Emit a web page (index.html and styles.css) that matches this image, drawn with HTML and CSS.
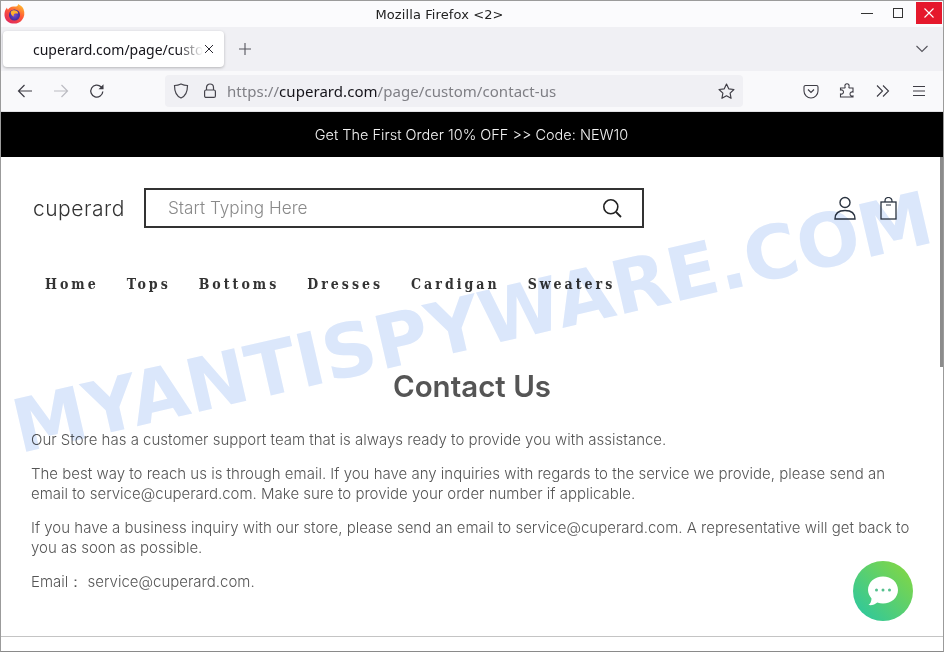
FILE: index.html
```html
<!DOCTYPE html>
<html lang="en">
<head>
<meta charset="utf-8">
<title>Mozilla Firefox</title>
<link rel="stylesheet" href="styles.css">
</head>
<body>
<div class="window">
  <header class="titlebar">
    <svg class="ff-logo" viewBox="0 0 24 24" width="24" height="24">
      <defs>
        <linearGradient id="ffa" x1="0.8" y1="0" x2="0.2" y2="1"><stop offset="0" stop-color="#ffbd2e"/><stop offset=".45" stop-color="#ff5a36"/><stop offset="1" stop-color="#e0245e"/></linearGradient>
        <radialGradient id="ffb" cx=".5" cy=".5" r=".5"><stop offset="0" stop-color="#7a4fd0"/><stop offset="1" stop-color="#3f2a9c"/></radialGradient>
      </defs>
      <path d="M16 2c3 2 4.500 2.500 5.500 5 1.500 4 1 8-1.500 11-2.500 3-6 4-9.500 3.500C5.500 21 2 17 2.500 11.500 2.800 9 3.500 7.500 5 5.500c0 1 .3 1.700 1 2.300C7 5.500 9.500 4 12.500 4.500 14 4.700 16.500 4 16 2z" fill="url(#ffa)"/>
      <circle cx="12.500" cy="13" r="5.500" fill="url(#ffb)"/>
      <path d="M9 9.500c2-2 6-1.500 7 1 .5 1.500-1 1-2.500 1-1.500 0-2.500 1.500-1.500 3-2-.5-4-3-3-5z" fill="#ffb02e"/>
    </svg>
    <div class="title">Mozilla Firefox &lt;2&gt;</div>
    <div class="winctl">
      <span class="min"></span>
      <span class="max"></span>
      <span class="close"><svg viewBox="0 0 12 12" width="12" height="12"><path d="M1.500 1.500l9 9M10.500 1.500l-9 9" stroke="#fff" stroke-width="1.100" fill="none"/></svg></span>
    </div>
  </header>
  <div class="tabbar">
    <div class="tab">
      <span class="tab-text">cuperard.com/page/custom/contact-us</span>
      <svg class="tab-x" viewBox="0 0 10 10" width="10" height="10"><path d="M1 1l8 8M9 1l-8 8" stroke="#2b2a33" stroke-width="1" fill="none"/></svg>
    </div>
    <svg class="newtab" viewBox="0 0 12 12" width="12" height="12"><path d="M6 0v12M0 6h12" stroke="#55545c" stroke-width="1.100" fill="none"/></svg>
    <svg class="tablist" viewBox="0 0 12 8" width="12" height="8"><path d="M.5 1L6 6.500 11.500 1" stroke="#55545c" stroke-width="1.100" fill="none"/></svg>
  </div>
  <nav class="toolbar">
    <svg class="tb-back" viewBox="0 0 16 16" width="16" height="16"><path d="M15 8H1.500M7.500 2L1.500 8l6 6" stroke="#3e3d45" stroke-width="1.200" fill="none"/></svg>
    <svg class="tb-fwd" viewBox="0 0 16 16" width="16" height="16"><path d="M1 8h13.500M8.500 2l6 6-6 6" stroke="#bcbcc2" stroke-width="1.200" fill="none"/></svg>
    <svg class="tb-reload" viewBox="0 0 16 16" width="16" height="16"><path d="M13.800 8.500A6 6 0 1 1 12 3.800L14 5.500" stroke="#3e3d45" stroke-width="1.300" fill="none"/><path d="M14.500 1.200v5h-5z" fill="#3e3d45"/></svg>
    <div class="urlbar">
      <svg class="shield" viewBox="0 0 16 16" width="16" height="16"><path d="M8 1c2 1 4 1.500 6.500 1.500 0 6-1.500 10.500-6.500 12.500C3 13 1.500 8.500 1.500 2.500 4 2.500 6 2 8 1z" stroke="#45444c" stroke-width="1.200" fill="none"/></svg>
      <svg class="lock" viewBox="0 0 14 16" width="14" height="16"><path d="M3.500 7V4.500a3.500 3.500 0 0 1 7 0V7" stroke="#45444c" stroke-width="1.200" fill="none"/><rect x="1.600" y="7" width="10.800" height="7.400" rx="1.500" stroke="#45444c" stroke-width="1.200" fill="none"/></svg>
      <span class="url"><span class="dim">https://</span>cuperard.com<span class="dim">/page/custom/contact-us</span></span>
      <svg class="star" viewBox="0 0 16 16" width="17" height="17"><path d="M8 1l2.100 4.500 4.900.6-3.600 3.400.9 4.900L8 12l-4.300 2.400.9-4.900L1 6.100l4.900-.6z" stroke="#3e3d45" stroke-width="1.100" fill="none" stroke-linejoin="round"/></svg>
    </div>
    <div class="tb-right">
      <svg viewBox="0 0 16 16" width="16" height="16"><path d="M2.500 2.500h11A1.500 1.500 0 0 1 15 4v4a7 7 0 0 1-14 0V4a1.500 1.500 0 0 1 1.500-1.500z" stroke="#3e3d45" stroke-width="1.100" fill="none"/><path d="M5 6.500L8 9.500l3-3" stroke="#3e3d45" stroke-width="1.200" fill="none"/></svg>
      <svg viewBox="0 0 16 16" width="16" height="16"><path d="M1.500 5H5c1 0 1.500-.5 1-1.500C5.500 2 6.500.8 8 .8s2.500 1.200 2 2.700c-.4 1 0 1.500 1 1.500h3v4c-1.500-.5-3 .3-3 2s1.500 2.500 3 2v1H1.500v-3c1.500.5 3-.3 3-2s-1.500-2.500-3-2z" stroke="#3e3d45" stroke-width="1.100" fill="none"/></svg>
      <svg viewBox="0 0 16 16" width="16" height="16"><path d="M2 2.500L7.500 8 2 13.500M8 2.500L13.500 8 8 13.500" stroke="#3e3d45" stroke-width="1.100" fill="none"/></svg>
      <svg viewBox="0 0 16 16" width="16" height="16"><path d="M2 3.500h12M2 8h12M2 12.500h12" stroke="#3e3d45" stroke-width="1.100" fill="none"/></svg>
    </div>
  </nav>
  <main class="viewport">
    <div class="promo">Get The First Order 10% OFF &gt;&gt; Code: NEW10</div>
    <div class="site-head">
      <div class="logo">cuperard</div>
      <div class="search">
        <span class="placeholder">Start Typing Here</span>
        <svg viewBox="0 0 20 20" width="20" height="20"><circle cx="8.800" cy="8.800" r="7" stroke="#222" stroke-width="1.600" fill="none"/><path d="M14 14l5 5" stroke="#222" stroke-width="1.800" fill="none"/></svg>
      </div>
      <div class="head-icons">
        <svg viewBox="0 0 22 24" width="22" height="24"><circle cx="11" cy="6.500" r="5" stroke="#2a3340" stroke-width="1.400" fill="none"/><path d="M1 23c0-6 4.500-8.500 10-8.500s10 2.500 10 8.500z" stroke="#2a3340" stroke-width="1.400" fill="none"/></svg>
        <svg viewBox="0 0 17 23" width="17" height="23"><rect x="1" y="5" width="15" height="17" stroke="#2a3340" stroke-width="1.300" fill="none"/><path d="M5 5V4a3.500 3.500 0 0 1 7 0v1M6 8h5" stroke="#2a3340" stroke-width="1.200" fill="none"/></svg>
      </div>
    </div>
    <ul class="menu">
      <li>Home</li><li>Tops</li><li>Bottoms</li><li>Dresses</li><li>Cardigan</li><li>Sweaters</li>
    </ul>
    <article class="content">
      <h1>Contact Us</h1>
      <p>Our Store has a customer support team that is always ready to provide you with assistance.</p>
      <p>The best way to reach us is through email. If you have any inquiries with regards to the service we provide, please send an email to service@cuperard.com. Make sure to provide your order number if applicable.</p>
      <p>If you have a business inquiry with our store, please send an email to service@cuperard.com. A representative will get back to you as soon as possible.</p>
      <p>Email：&nbsp;service@cuperard.com.</p>
    </article>
    <div class="rule"></div>
    <div class="scrollbar"></div>
    <div class="chat">
      <svg viewBox="0 0 32 32" width="32" height="32"><path d="M16 1.500c8.300 0 15 5.800 15 13.500s-6.700 13.500-15 13.500c-2 0-4-.4-5.700-1C8 29.500 5 30.500 1.500 30c2-1.500 3-4 3-6.500C2.500 21 1 18 1 15 1 7.300 7.700 1.500 16 1.500z" fill="#fff"/><circle cx="9.500" cy="15" r="1.500" fill="#55c08e"/><circle cx="16" cy="15" r="1.500" fill="#55c08e"/><circle cx="22.500" cy="15" r="1.500" fill="#55c08e"/></svg>
    </div>
    <div class="watermark">MYANTISPYWARE.COM</div>
  </main>
</div>
</body>
</html>
```
FILE: styles.css
```css
* { box-sizing: border-box; }
html, body { margin: 0; padding: 0; width: 944px; height: 652px; overflow: hidden; background: #fff; }
.window { width: 944px; height: 652px; display: flex; flex-direction: column; border: 1px solid #9b9b9b; border-bottom-color: #8a8a8a; overflow: hidden; position: relative; font-family: "Noto Sans", sans-serif; }
.titlebar { height: 26px; flex: none; background: #fbfbfd; display: flex; align-items: center; position: relative; justify-content: center; padding-right: 65px; }
.ff-logo { position: absolute; left: 1px; top: 1px; }
.title { font-size: 13px; color: #222; font-family: "DejaVu Sans", sans-serif; letter-spacing: 0.1px; }
.winctl { position: absolute; right: 1px; top: 1px; height: 22px; display: flex; align-items: center; }
.min { width: 12px; height: 1px; background: #333; margin-right: 20px; }
.max { width: 10px; height: 10px; border: 1px solid #333; margin-right: 13px; }
.close { width: 26px; height: 22px; background: #e5182c; display: flex; align-items: center; justify-content: center; }
.tabbar { height: 44px; flex: none; background: #f0f0f4; display: flex; align-items: center; position: relative; }
.tab { margin-left: 2px; width: 221px; height: 36px; background: #fff; border-radius: 4px; box-shadow: 0 1px 3px rgba(0,0,0,.25); display: flex; align-items: center; padding-left: 30px; }
.tab-text { font-size: 14px; color: #15141a; width: 170px; white-space: nowrap; overflow: hidden; -webkit-mask-image: linear-gradient(90deg, #000 85%, transparent); mask-image: linear-gradient(90deg, #000 85%, transparent); }
.tab-x { margin-left: 1px; margin-top: -1px; }
.newtab { margin-left: 15px; }
.tablist { position: absolute; right: 15px; top: 18px; }
.toolbar { height: 41px; flex: none; background: #f9f9fb; display: flex; align-items: center; border-bottom: 1px solid #e0e0e4; }
.tb-back { margin-left: 16px; }
.tb-fwd { margin-left: 20px; }
.tb-reload { margin-left: 20px; }
.urlbar { margin-left: 60px; width: 578px; height: 32px; background: #f0f0f4; border-radius: 4px; display: flex; align-items: center; padding: 0 8px 0 8px; }
.shield { flex: none; }
.lock { flex: none; margin-left: 14px; }
.url { font-size: 15px; color: #15141a; margin-left: 10px; white-space: nowrap; letter-spacing: 0.05px; }
.dim { color: #7f7f85; }
.star { margin-left: auto; }
.tb-right { margin-left: 60px; display: flex; gap: 20px; }
.viewport { flex: 1; position: relative; overflow: hidden; background: #fff; font-family: "Inter", sans-serif; }
.promo { height: 45px; background: #000; color: #f2f2f2; display: flex; align-items: center; justify-content: center; font-size: 14.500px; font-weight: 300; padding-right: 1px; }
.site-head { height: 102px; display: flex; align-items: center; padding-left: 32px; }
.logo { font-size: 21px; color: #333; width: 111px; font-weight: 300; letter-spacing: 0.5px; }
.search { width: 500px; height: 40px; border: 2px solid #333; display: flex; align-items: center; justify-content: space-between; padding: 0 20px 0 22px; }
.placeholder { font-size: 17.200px; line-height: 20px; margin-top: -1px; color: #8a8a8a; font-weight: 300; }
.head-icons { display: flex; margin-left: 190px; gap: 24px; align-items: flex-end; }
.menu { list-style: none; margin: 0; padding: 0 0 0 44px; display: flex; gap: 28px; height: 69px; font-family: "DejaVu Serif", serif; font-stretch: condensed; font-size: 14px; font-weight: 700; letter-spacing: 3px; color: #333; }
.menu li { padding-top: 17px; }
.content { padding: 0 30px; color: #555; font-size: 15px; line-height: 20px; font-weight: 300; }
.content h1 { text-align: center; font-size: 29.500px; line-height: 34px; font-weight: 600; margin: 41px 0 27px; color: #555; }
.content p { margin: 0 0 14px; }
.rule { position: absolute; left: 0; right: 0; top: 524px; height: 1px; background: #c4c4c4; }
.scrollbar { position: absolute; right: 0; top: 45px; width: 3px; height: 210px; background: #8c8c8c; }
.chat { position: absolute; left: 852px; top: 449px; width: 60px; height: 60px; border-radius: 50%; background: linear-gradient(45deg, #26c6a6, #8ad83c); display: flex; align-items: center; justify-content: center; }
.watermark { position: absolute; left: 21px; top: 279px; font-family: "DejaVu Sans", sans-serif; font-weight: 700; font-size: 74px; line-height: 72px; color: #dbe7fb; white-space: nowrap; transform: rotate(-13deg); transform-origin: left bottom; pointer-events: none; mix-blend-mode: multiply; }
```
